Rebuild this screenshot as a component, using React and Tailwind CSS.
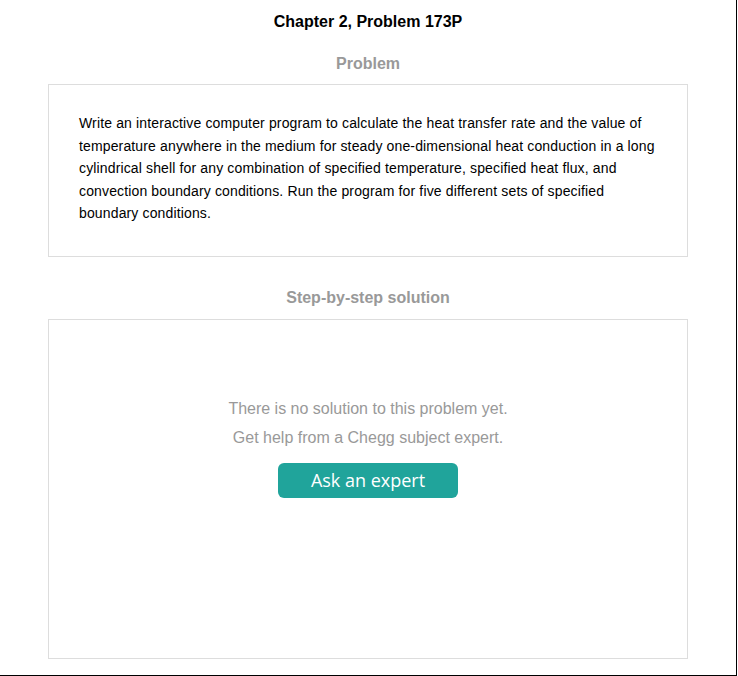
export default function App() {
  return (
    <div
      className="w-[737px] h-[676px] border-r border-b border-black bg-white overflow-hidden"
      style={{ fontFamily: '"Liberation Sans", Arial, sans-serif' }}
    >
      <div className="px-[48px] pt-[12px]">
        <h1 className="text-center text-[16px] font-bold text-black leading-[20px]">
          Chapter 2, Problem 173P
        </h1>

        {/* Problem */}
        <h2 className="text-center text-[16px] font-bold text-[#999999] leading-[20px] mt-[22px]">
          Problem
        </h2>
        <div className="mt-[10px] h-[173px] border border-[#dddddd] pl-[30px] pr-[29px] pt-[27px]">
          <p className="text-[14px] leading-[22.5px] tracking-[0.14px] text-black">
            Write an interactive computer program to calculate the heat transfer rate and the value of
            temperature anywhere in the medium for steady one-dimensional heat conduction in a long
            cylindrical shell for any combination of specified temperature, specified heat flux, and
            convection boundary conditions. Run the program for five different sets of specified
            boundary conditions.
          </p>
        </div>

        {/* Solution */}
        <h2 className="text-center text-[16px] font-bold text-[#999999] leading-[20px] mt-[31px]">
          Step-by-step solution
        </h2>
        <div className="mt-[11px] h-[340px] border border-[#dddddd] flex flex-col items-center pt-[74px]">
          <p className="text-[16px] leading-[29px] text-[#999999]">
            There is no solution to this problem yet.
          </p>
          <p className="text-[16px] leading-[29px] text-[#999999]">
            Get help from a Chegg subject expert.
          </p>
          <button
            className="mt-[11px] w-[180px] h-[35px] rounded-[6px] bg-[#20a49b] text-white text-[18px] leading-[35px]"
            style={{ fontFamily: '"Open Sans", "DejaVu Sans", sans-serif' }}
          >
            Ask an expert
          </button>
        </div>
      </div>
    </div>
  )
}
